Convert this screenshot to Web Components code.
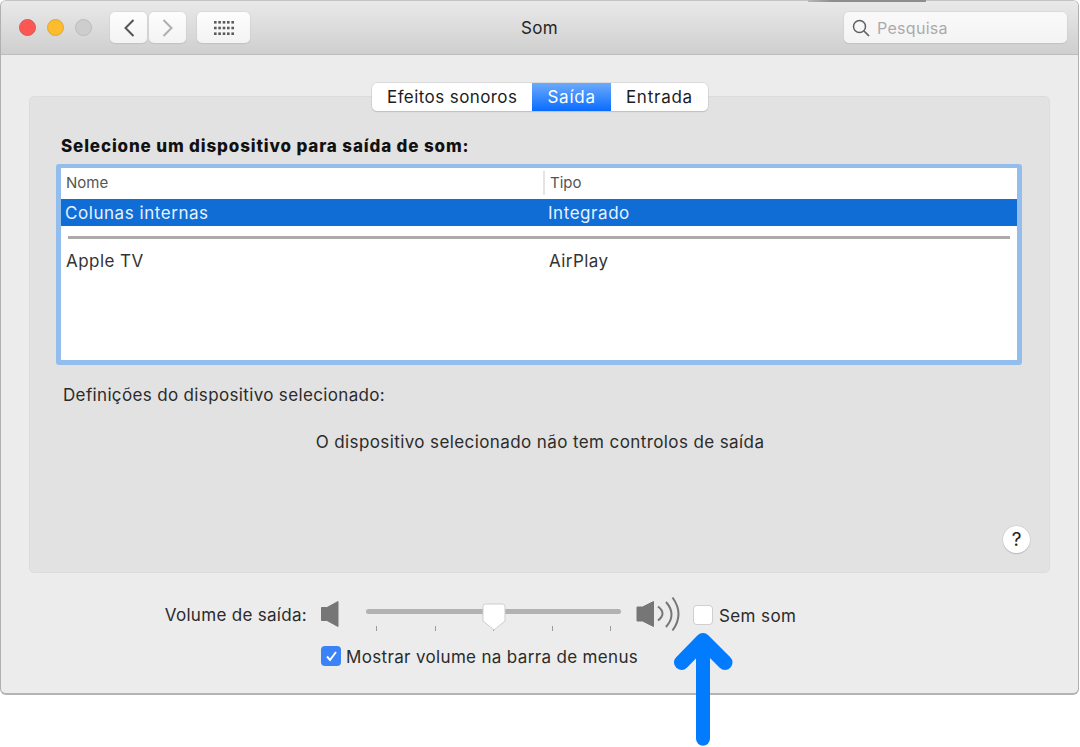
<!DOCTYPE html>
<html lang="pt">
<head>
<meta charset="utf-8">
<title>Som</title>
<style>
    html, body { margin: 0; padding: 0; background: #fff; }
    body { width: 1080px; height: 747px; overflow: hidden; position: relative; font-family: Inter, "Liberation Sans", sans-serif; color: #1d1d1d; letter-spacing: .4px; }
</style>
</head>
<body>
<janela-som>
    <barra-titulo slot="barra">Som</barra-titulo>
    <painel-saida></painel-saida>
    <linha-volume></linha-volume>
</janela-som>
<linha-topo></linha-topo>
<seta-azul></seta-azul>

<script>
class JanelaSom extends HTMLElement {
    constructor() {
        super();
        this.attachShadow({ mode: 'open' });
    }

    connectedCallback() {
        this.shadowRoot.innerHTML = `
            <style>
                :host {
                    display: flex;
                    flex-direction: column;
                    box-sizing: border-box;
                    width: 1079px;
                    height: 695px;
                    background: #ececec;
                    border: 1px solid #b0b0b0;
                    border-top-color: #c4c4c4;
                    border-bottom: 2px solid #b4b4b4;
                    border-radius: 6px;
                    overflow: hidden;
                }
            </style>
            <slot name="barra"></slot>
            <slot></slot>
        `;
    }
}

class BarraTitulo extends HTMLElement {
    constructor() {
        super();
        this.attachShadow({ mode: 'open' });
    }

    connectedCallback() {
        this.shadowRoot.innerHTML = `
            <style>
                :host {
                    display: grid;
                    grid-template-columns: 1fr auto 1fr;
                    align-items: center;
                    box-sizing: border-box;
                    height: 54px;
                    padding: 0 11px;
                    background: linear-gradient(#e9e9e9, #cfcfcf);
                    border-bottom: 1px solid #bdbdbd;
                }
                .esq { display: flex; align-items: center; padding-left: 7px; }
                .luz { width: 17px; height: 17px; border-radius: 50%; box-sizing: border-box; margin-right: 11px; }
                .vermelho { background: #fc5753; border: 1px solid #e5524e; }
                .amarelo { background: #fdbc2e; border: 1px solid #e3a82c; }
                .cinza { background: #cdcdcd; border: 1px solid #bcbcbc; margin-right: 0; }
                .botao {
                    display: flex; align-items: center; justify-content: center;
                    box-sizing: border-box;
                    height: 31px;
                    background: linear-gradient(#fdfdfd, #f3f3f3);
                    border-radius: 5px;
                    box-shadow: 0 0 0 .5px #d0d0d0, 0 1px 1px #b4b4b4;
                }
                .voltar { width: 37px; margin-left: 18px; }
                .avancar { width: 37px; margin-left: 2px; }
                .grelha { width: 53px; margin-left: 11px; }
                .titulo { font-size: 17px; color: #262626; }
                .dir { display: flex; justify-content: flex-end; }
                .pesquisa {
                    display: flex; align-items: center; gap: 7px;
                    box-sizing: border-box;
                    width: 223px; height: 31px;
                    padding-left: 8px;
                    background: linear-gradient(#f9f9f9, #f4f4f4);
                    border-radius: 5px;
                    box-shadow: 0 0 0 .5px #d0d0d0, 0 1px 1px #b4b4b4;
                    font-size: 16px;
                    letter-spacing: .3px;
                    color: #ababab;
                }
                svg { display: block; }
            </style>
            <div class="esq">
                <div class="luz vermelho"></div>
                <div class="luz amarelo"></div>
                <div class="luz cinza"></div>
                <div class="botao voltar">
                    <svg width="12" height="20" viewBox="0 0 12 20"><path d="M10.5 2 L2.5 10 L10.5 18" fill="none" stroke="#555" stroke-width="2"/></svg>
                </div>
                <div class="botao avancar">
                    <svg width="12" height="20" viewBox="0 0 12 20"><path d="M1.5 2 L9.5 10 L1.5 18" fill="none" stroke="#aeaeae" stroke-width="2"/></svg>
                </div>
                <div class="botao grelha">
                    <svg width="20" height="14" viewBox="0 0 20 14" fill="#5c5c5c">
                        <rect x="0" y="0" width="2.6" height="2.6"/><rect x="4.3" y="0" width="2.6" height="2.6"/><rect x="8.7" y="0" width="2.6" height="2.6"/><rect x="13" y="0" width="2.6" height="2.6"/><rect x="17.4" y="0" width="2.6" height="2.6"/>
                        <rect x="0" y="5.700" width="2.6" height="2.6"/><rect x="4.3" y="5.700" width="2.6" height="2.6"/><rect x="8.7" y="5.700" width="2.6" height="2.6"/><rect x="13" y="5.700" width="2.6" height="2.6"/><rect x="17.4" y="5.700" width="2.6" height="2.6"/>
                        <rect x="0" y="11.400" width="2.6" height="2.6"/><rect x="4.3" y="11.400" width="2.6" height="2.6"/><rect x="8.7" y="11.400" width="2.6" height="2.6"/><rect x="13" y="11.400" width="2.6" height="2.6"/><rect x="17.4" y="11.400" width="2.6" height="2.6"/>
                    </svg>
                </div>
            </div>
            <div class="titulo"><slot></slot></div>
            <div class="dir">
                <div class="pesquisa">
                    <svg width="18" height="18" viewBox="0 0 18 18" fill="none" stroke="#606060"><circle cx="7.5" cy="7.5" r="6" stroke-width="1.5"/><path d="M12 12 L17 17" stroke-width="1.7"/></svg>
                    <span>Pesquisa</span>
                </div>
            </div>
        `;
    }
}

class PainelSaida extends HTMLElement {
    constructor() {
        super();
        this.attachShadow({ mode: 'open' });
    }

    connectedCallback() {
        this.shadowRoot.innerHTML = `
            <style>
                :host {
                    display: block;
                    position: relative;
                    box-sizing: border-box;
                    margin: 41px 28px 0 28px;
                    height: 477px;
                    background: #e2e2e2;
                    border: 1px solid #dcdcdc;
                    border-radius: 5px;
                    padding: 38px 28px 0 26px;
                    font-size: 17px;
                    color: #222;
                }
                .abas {
                    position: absolute;
                    top: -14px; left: 342px;
                    display: flex;
                    height: 28px;
                    background: #fff;
                    border-radius: 5px;
                    box-shadow: 0 0 0 .5px #c8c8c8, 0 1px 1px #b8b8b8;
                    overflow: hidden;
                    line-height: 29px;
                }
                .aba { padding: 0 15px; color: #1d1d1d; letter-spacing: .42px; }
                .ativa { background: linear-gradient(#6caafb, #0a6cff); color: #fff; letter-spacing: .8px; }
                .ultima { letter-spacing: .75px; }
                h2 { margin: 0 0 0 5px; font-size: 17px; font-weight: 800; letter-spacing: .86px; line-height: 22px; color: #111; }
                .foco {
                    margin-top: 7px;
                    box-sizing: border-box;
                    width: 966px;
                    height: 201px;
                    border: 5px solid #93bdec;
                    border-top-width: 4px;
                    border-radius: 3px;
                    background: #fff;
                }
                .def { margin: 19px 0 0 7px; line-height: 22px; color: #2b2b2b; letter-spacing: .35px; }
                .aviso { margin-top: 25px; padding-left: 3px; text-align: center; line-height: 22px; color: #2b2b2b; }
                .ajuda {
                    position: absolute;
                    right: 19px; bottom: 19px;
                    width: 27px; height: 27px;
                    border-radius: 50%;
                    background: #fff;
                    box-shadow: 0 0 0 .5px #c8c8c8, 0 1px 1px #b0b0b0;
                    text-align: center;
                    line-height: 28px;
                    font-size: 19px;
                    letter-spacing: 0;
                    color: #222;
                }
            </style>
            <div class="abas">
                <div class="aba">Efeitos sonoros</div>
                <div class="aba ativa">Saída</div>
                <div class="aba ultima">Entrada</div>
            </div>
            <h2>Selecione um dispositivo para saída de som:</h2>
            <div class="foco"><lista-dispositivos></lista-dispositivos></div>
            <p class="def">Definições do dispositivo selecionado:</p>
            <div class="aviso">O dispositivo selecionado não tem controlos de saída</div>
            <div class="ajuda">?</div>
        `;
    }
}

class ListaDispositivos extends HTMLElement {
    constructor() {
        super();
        this.attachShadow({ mode: 'open' });
    }

    connectedCallback() {
        this.shadowRoot.innerHTML = `
            <style>
                :host { display: block; font-size: 17px; letter-spacing: .55px; }
                .linha { display: grid; grid-template-columns: 484px 1fr; }
                .cab { height: 30px; align-items: center; font-size: 15px; letter-spacing: 0; color: #555; }
                .cab div { padding-left: 5px; line-height: 24px; }
                .cab div + div { border-left: 2px solid #e4e4e4; margin-left: -2px; padding-left: 5px; }
                .sel { height: 27px; line-height: 29px; background: #106dd6; color: #e8f1fc; margin-top: 1px; }
                .sel div { padding-left: 4px; }
                .sel div + div { padding-left: 3px; }
                .sep { height: 3px; background: #ababab; margin: 10px 7px 0 7px; }
                .outro { height: 27px; line-height: 25px; margin-top: 10px; color: #333; letter-spacing: .45px; }
                .outro div { padding-left: 5px; }
                .outro div + div { padding-left: 4px; }
            </style>
            <div class="linha cab"><div>Nome</div><div>Tipo</div></div>
            <div class="linha sel"><div>Colunas internas</div><div>Integrado</div></div>
            <div class="sep"></div>
            <div class="linha outro"><div>Apple TV</div><div>AirPlay</div></div>
        `;
    }
}

class CaixaMarcar extends HTMLElement {
    constructor() {
        super();
        this.attachShadow({ mode: 'open' });
    }

    connectedCallback() {
        const marcada = this.hasAttribute('marcada');
        this.shadowRoot.innerHTML = `
            <style>
                :host { display: inline-flex; align-items: center; gap: 6px; font-size: 17px; color: #2b2b2b; }
                :host([marcada]) { gap: 5px; letter-spacing: .34px; }
                .caixa {
                    flex: none;
                    width: 20px; height: 20px;
                    box-sizing: border-box;
                    border-radius: 4px;
                    display: flex; align-items: center; justify-content: center;
                }
                .nao { background: #fff; box-shadow: inset 0 0 0 1px #cfcfcf; }
                .sim { background: #3a82f7; }
                span { padding-top: 2px; }
            </style>
            <div class="caixa ${marcada ? 'sim' : 'nao'}">
                ${marcada ? '<svg width="13" height="12" viewBox="0 0 13 12"><path d="M2 6.5 L5 10 L11 2" fill="none" stroke="#fff" stroke-width="2"/></svg>' : ''}
            </div>
            <span><slot></slot></span>
        `;
    }
}

class LinhaVolume extends HTMLElement {
    constructor() {
        super();
        this.attachShadow({ mode: 'open' });
    }

    connectedCallback() {
        this.shadowRoot.innerHTML = `
            <style>
                :host {
                    display: grid;
                    grid-template-columns: 306px auto;
                    grid-auto-rows: auto;
                    padding-top: 28px;
                    font-size: 17px;
                    color: #2b2b2b;
                }
                .rotulo { text-align: right; line-height: 28px; letter-spacing: .3px; }
                .controlos { display: flex; align-items: flex-start; padding-left: 13px; height: 36px; }
                svg { display: block; flex: none; }
                .menor { margin-top: -1px; }
                .regua { width: 255px; margin-left: 26px; position: relative; height: 36px; flex: none; }
                .trilho { position: absolute; left: 0; right: 0; top: 8px; height: 5px; border-radius: 3px; background: #b2b2b2; }
                .marcas { position: absolute; left: 10px; right: 10px; top: 25px; display: flex; justify-content: space-between; }
                .marcas i { width: 1px; height: 5px; background: #9a9a9a; display: block; }
                .cursor { position: absolute; left: 116px; top: 2px; }
                .maior { margin: -5px 0 0 15px; }
                .sem { margin: 3px 0 0 11px; }
                .mostrar { grid-column: 2; margin: 8px 0 0 14px; }
            </style>
            <div class="rotulo">Volume de saída:</div>
            <div class="controlos">
                <svg class="menor" width="20" height="28" viewBox="0 0 20 28"><path d="M1.5 7.5 H7 L18 1.5 V26.500 L7 20.500 H1.5 Z" fill="#767676" stroke="#767676" stroke-linejoin="round"/></svg>
                <div class="regua">
                    <div class="trilho"></div>
                    <div class="marcas"><i></i><i></i><i></i><i></i><i></i></div>
                    <svg class="cursor" width="24" height="28" viewBox="0 0 24 28"><path d="M3.5 1 H20.5 Q23 1 23 3.5 V18 L12 27 L1 18 V3.5 Q1 1 3.5 1 Z" fill="#fff" stroke="#cdcdcd"/></svg>
                </div>
                <svg class="maior" width="46" height="36" viewBox="0 0 46 36">
                    <path d="M1 11 H6.500 L17.500 5.500 V30.500 L6.500 25 H1 Z" fill="#767676" stroke="#767676" stroke-linejoin="round"/>
                    <path d="M22 10.500 Q31 17.500 22 24.500" fill="none" stroke="#767676" stroke-width="2"/>
                    <path d="M30 6 Q41 18.500 30 31" fill="none" stroke="#767676" stroke-width="2"/>
                    <path d="M36.500 1.500 Q48.500 18 36.500 34.500" fill="none" stroke="#767676" stroke-width="2"/>
                </svg>
                <caixa-marcar class="sem">Sem som</caixa-marcar>
            </div>
            <caixa-marcar class="mostrar" marcada>Mostrar volume na barra de menus</caixa-marcar>
        `;
    }
}

class LinhaTopo extends HTMLElement {
    constructor() {
        super();
        this.attachShadow({ mode: 'open' });
    }

    connectedCallback() {
        this.shadowRoot.innerHTML = `
            <style>
                :host {
                    display: block;
                    position: absolute;
                    left: 808px; top: 0;
                    width: 118px; height: 2px;
                    background: linear-gradient(90deg, #b8b8b8, #8e8e8e 20%, #8e8e8e);
                }
            </style>
        `;
    }
}

class SetaAzul extends HTMLElement {
    constructor() {
        super();
        this.attachShadow({ mode: 'open' });
    }

    connectedCallback() {
        this.shadowRoot.innerHTML = `
            <style>
                :host { display: block; position: absolute; left: 670px; top: 630px; width: 66px; height: 117px; }
                svg { display: block; }
            </style>
            <svg width="66" height="117" viewBox="0 0 66 117" fill="none" stroke="#037bff" stroke-linecap="round" stroke-linejoin="round">
                <path d="M33 22 V108.700" stroke-width="14"/>
                <path d="M11.500 32.500 L33 10.500 L55 32.500" stroke-width="15"/>
            </svg>
        `;
    }
}

customElements.define('janela-som', JanelaSom);
customElements.define('barra-titulo', BarraTitulo);
customElements.define('painel-saida', PainelSaida);
customElements.define('lista-dispositivos', ListaDispositivos);
customElements.define('caixa-marcar', CaixaMarcar);
customElements.define('linha-volume', LinhaVolume);
customElements.define('linha-topo', LinhaTopo);
customElements.define('seta-azul', SetaAzul);
</script>
</body>
</html>
